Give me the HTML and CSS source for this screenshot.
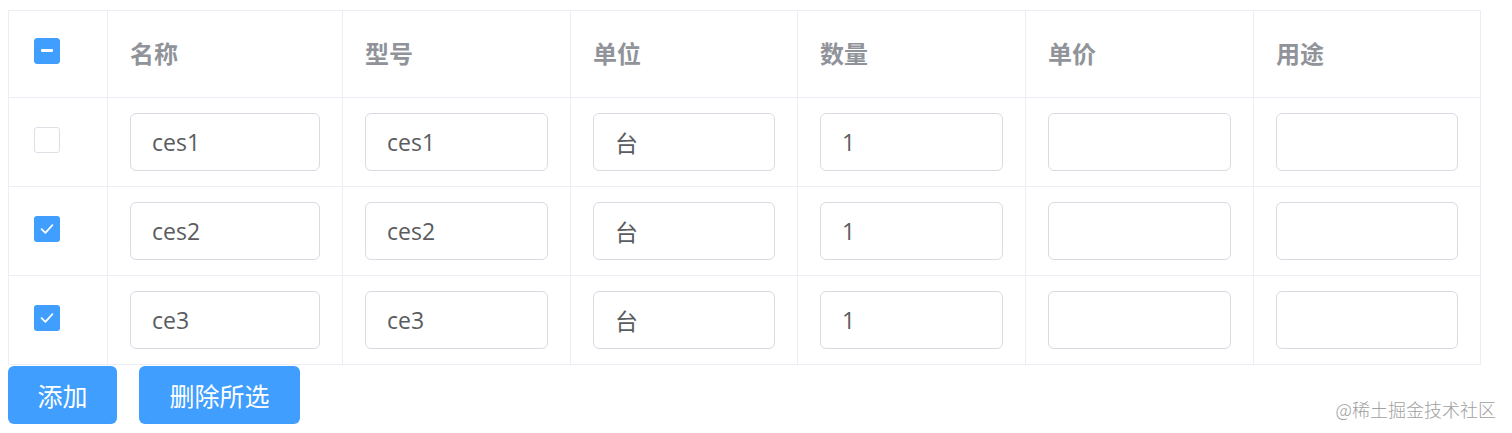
FILE: index.html
```html
<!DOCTYPE html>
<html lang="zh-CN">
<head>
<meta charset="utf-8">
<title>表格</title>
<link rel="stylesheet" href="styles.css">
</head>
<body>
<div class="page">
  <div class="grid">
    <div class="cell head sel"><span class="cb cb-ind"><span class="minus"></span></span></div>
    <div class="cell head">名称</div>
    <div class="cell head">型号</div>
    <div class="cell head">单位</div>
    <div class="cell head">数量</div>
    <div class="cell head">单价</div>
    <div class="cell head">用途</div>

    <div class="cell sel"><span class="cb"></span></div>
    <div class="cell"><div class="inp">ces1</div></div>
    <div class="cell"><div class="inp">ces1</div></div>
    <div class="cell"><div class="inp">台</div></div>
    <div class="cell"><div class="inp">1</div></div>
    <div class="cell"><div class="inp"></div></div>
    <div class="cell"><div class="inp"></div></div>

    <div class="cell sel"><span class="cb cb-on"><svg viewBox="0 0 26 26" width="26" height="26"><path d="M7.6 13.2 L11.4 16.8 L18.4 9.2" fill="none" stroke="#fff" stroke-width="1.8" stroke-linecap="round" stroke-linejoin="round"/></svg></span></div>
    <div class="cell"><div class="inp">ces2</div></div>
    <div class="cell"><div class="inp">ces2</div></div>
    <div class="cell"><div class="inp">台</div></div>
    <div class="cell"><div class="inp">1</div></div>
    <div class="cell"><div class="inp"></div></div>
    <div class="cell"><div class="inp"></div></div>

    <div class="cell sel"><span class="cb cb-on"><svg viewBox="0 0 26 26" width="26" height="26"><path d="M7.6 13.2 L11.4 16.8 L18.4 9.2" fill="none" stroke="#fff" stroke-width="1.8" stroke-linecap="round" stroke-linejoin="round"/></svg></span></div>
    <div class="cell"><div class="inp">ce3</div></div>
    <div class="cell"><div class="inp">ce3</div></div>
    <div class="cell"><div class="inp">台</div></div>
    <div class="cell"><div class="inp">1</div></div>
    <div class="cell"><div class="inp"></div></div>
    <div class="cell"><div class="inp"></div></div>
  </div>
  <div class="actions">
    <button class="btn btn-add">添加</button>
    <button class="btn btn-del">删除所选</button>
    <span class="watermark">@稀土掘金技术社区</span>
  </div>
</div>
</body>
</html>
```
FILE: styles.css
```css
* { box-sizing: border-box; }
html, body { margin: 0; padding: 0; background: #fff; }
body {
  font-family: "Noto Sans CJK SC", "Open Sans", sans-serif;
  color: #606266;
}
.page {
  padding: 10px 0 0 8px;
  width: 1512px;
}
.grid {
  display: grid;
  grid-template-columns: 99px 235px 228px 227px 228px 228px 227px;
  grid-template-rows: 87px 89px 89px 89px;
  width: 1473px;
  border-top: 1px solid #ebeef5;
  border-left: 1px solid #ebeef5;
}
.cell {
  border-right: 1px solid #ebeef5;
  border-bottom: 1px solid #ebeef5;
  padding: 15px 22px;
  display: flex;
  align-items: center;
}
.cell.head {
  font-size: 24px;
  font-weight: 700;
  color: #909399;
  padding-top: 0;
  padding-bottom: 3px;
}
.cell.sel { padding-left: 25px; padding-right: 0; padding-top: 0; padding-bottom: 4px; }
.cell.head.sel { padding-top: 0; padding-bottom: 7px; }
.cb {
  width: 26px;
  height: 26px;
  border: 1px solid #dcdfe6;
  border-radius: 3px;
  background: #fff;
  display: flex;
  align-items: center;
  justify-content: center;
}
.cb svg { display: block; flex: none; }
.cb-ind, .cb-on {
  background: #409eff;
  border-color: #409eff;
}
.cb-on { border: 0; }
.minus {
  width: 12px;
  height: 3px;
  background: #fff;
  border-radius: 1px;
}
.inp {
  width: 100%;
  height: 58px;
  border: 1.5px solid #d8dbe2;
  border-radius: 6px;
  padding: 0 21px;
  display: flex;
  align-items: center;
  font-family: "Open Sans", "Noto Sans CJK SC", sans-serif;
  font-size: 23px;
  color: #5a5c60;
  padding-bottom: 1px;
}
.actions {
  display: flex;
  align-items: flex-start;
  gap: 22px;
  margin-top: 1px;
  width: 1504px;
  height: 58px;
}
.btn {
  height: 58px;
  border: 0;
  border-radius: 6px;
  background: #409eff;
  color: #fff;
  font-family: "Noto Sans CJK SC", sans-serif;
  font-size: 25px;
  margin: 0;
  padding: 0;
}
.btn-add { width: 109px; }
.btn-del { width: 161px; }
.watermark {
  margin-left: auto;
  margin-top: 32px;
  margin-right: 16px;
  font-family: "Noto Sans CJK SC", sans-serif;
  font-size: 18px;
  font-weight: 300;
  color: #a0a0a0;
  line-height: 22px;
}
```
